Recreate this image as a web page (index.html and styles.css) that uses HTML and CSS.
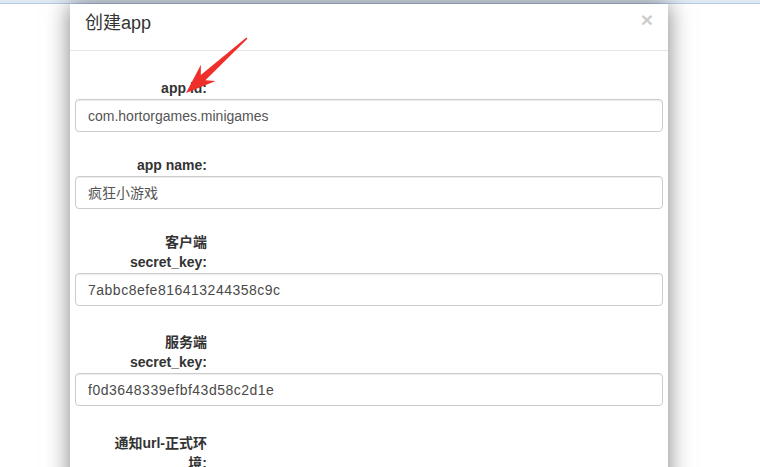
FILE: index.html
```html
<!DOCTYPE html>
<html lang="zh-CN">
<head>
<meta charset="utf-8">
<title>创建app</title>
<link rel="stylesheet" href="styles.css">
</head>
<body>
<div class="topbar"></div>
<div class="modal">
  <div class="modal-header">
    <span class="close">×</span>
    <h4 class="modal-title">创建app</h4>
  </div>
  <div class="modal-body">
    <div class="form-group">
      <label class="control-label">app id:</label>
      <div class="form-control">com.hortorgames.minigames</div>
    </div>
    <div class="form-group">
      <label class="control-label">app name:</label>
      <div class="form-control">疯狂小游戏</div>
    </div>
    <div class="form-group">
      <label class="control-label">客户端secret_key:</label>
      <div class="form-control mono">7abbc8efe816413244358c9c</div>
    </div>
    <div class="form-group spaced">
      <label class="control-label">服务端secret_key:</label>
      <div class="form-control mono">f0d3648339efbf43d58c2d1e</div>
    </div>
    <div class="form-group spaced-more">
      <label class="control-label">通知url-正式环境:</label>
      <div class="form-control"></div>
    </div>
  </div>
</div>
<svg class="arrow" width="110" height="70" viewBox="0 0 110 70">
  <polygon points="36,63 65.7,51.1 55.4,50.2 97.4,8.7 96.4,7.5 50.8,45 50.9,34.7" fill="#ef2f2a"/>
</svg>
</body>
</html>
```
FILE: styles.css
```css
html, body {
  margin: 0;
  padding: 0;
  height: 100%;
  overflow: hidden;
  background: #fff;
}
body {
  font-family: "Liberation Sans", Arial, "Noto Sans CJK SC", sans-serif;
  font-size: 14px;
  color: #333;
  position: relative;
}
.topbar {
  height: 3px;
  background: #dfe9f6;
  border-bottom: 1px solid #b8cbe4;
}
.modal {
  margin-left: 70px;
  width: 598px;
  background: #fff;
  box-shadow: 0 0 22px rgba(0, 0, 0, 0.5);
  min-height: 600px;
}
.modal-header {
  padding: 6px 15px 14px;
  border-bottom: 1px solid #e5e5e5;
}
.modal-title {
  margin: 0;
  font-size: 18px;
  font-weight: normal;
  line-height: 26px;
  color: #333;
}
.close {
  float: right;
  font-size: 21px;
  font-weight: bold;
  line-height: 26px;
  color: #000;
  opacity: 0.2;
  margin-top: -3px;
}
.modal-body {
  display: flex;
  flex-direction: column;
  padding: 20px 5px 0;
}
.form-group {
  display: flex;
  flex-direction: column;
  margin-bottom: 16px;
}
.form-group.spaced {
  margin-top: 3px;
}
.form-group.spaced-more {
  margin-top: 4px;
}
.control-label {
  width: 104px;
  margin-left: 28px;
  padding-top: 7px;
  margin-bottom: 1px;
  text-align: right;
  font-weight: bold;
  line-height: 20px;
  color: #333;
}
.form-control {
  box-sizing: border-box;
  height: 33px;
  padding: 6px 12px;
  border: 1px solid #ccc;
  border-radius: 4px;
  box-shadow: inset 0 1px 1px rgba(0, 0, 0, 0.075);
  font-size: 14px;
  line-height: 20px;
  color: #555;
}
.form-control.mono {
  letter-spacing: 0.5px;
  color: #4a4a4a;
}
.arrow {
  position: absolute;
  left: 150px;
  top: 30px;
}
```
